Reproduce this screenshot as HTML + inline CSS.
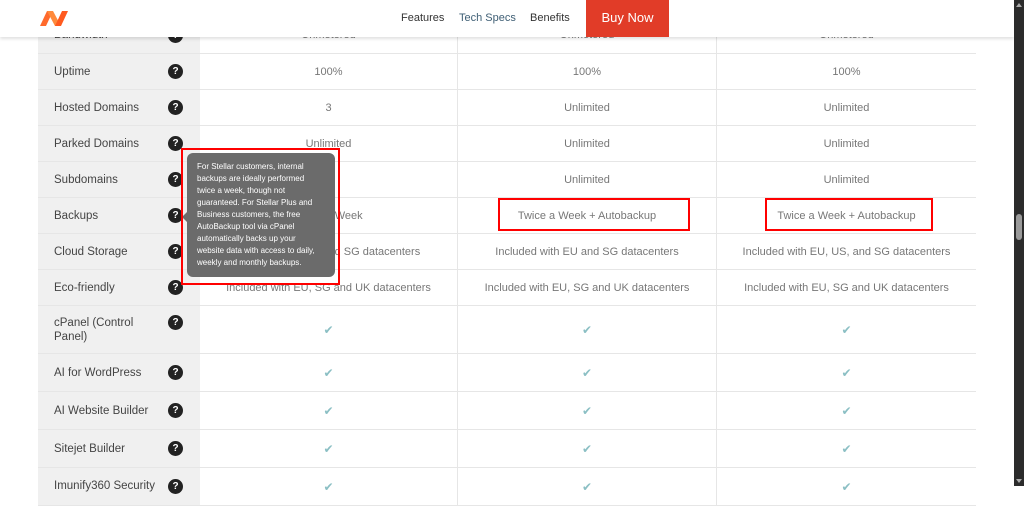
<!DOCTYPE html>
<html><head><meta charset="utf-8"><style>
*{margin:0;padding:0;box-sizing:border-box}
body{width:1024px;height:486px;overflow:hidden;background:#fff;font-family:"Liberation Sans",sans-serif;position:relative}
.row{position:absolute;left:38px;width:938px;border-bottom:1px solid #e6e6e6}
.lab{position:absolute;left:0;top:0;bottom:0;width:162px;background:#f0f0f0;color:#444;font-size:11.5px;padding-left:16px;display:flex;align-items:center}
.q{position:absolute;left:130px;width:15px;height:15px;border-radius:50%;background:#222;color:#fff;font-size:10px;font-weight:bold;text-align:center;line-height:15px}
.c{position:absolute;top:0;bottom:0;display:flex;align-items:center;justify-content:center;color:#777;font-size:11px}
.c1{left:162px;width:258px;border-right:1px solid #e6e6e6}
.c2{left:420px;width:259px;border-right:1px solid #e6e6e6}
.c3{left:679px;width:259px}
.ck{color:#8bbfc4;font-size:12px}
</style></head><body>

<div class="row" style="top:17px;height:37px"><div class="lab">Bandwidth</div><div class="q" style="top:11px">?</div><div class="c c1">Unmetered</div><div class="c c2">Unmetered</div><div class="c c3">Unmetered</div></div>
<div class="row" style="top:54px;height:36px"><div class="lab">Uptime</div><div class="q" style="top:10px">?</div><div class="c c1">100%</div><div class="c c2">100%</div><div class="c c3">100%</div></div>
<div class="row" style="top:90px;height:36px"><div class="lab">Hosted Domains</div><div class="q" style="top:10px">?</div><div class="c c1">3</div><div class="c c2">Unlimited</div><div class="c c3">Unlimited</div></div>
<div class="row" style="top:126px;height:36px"><div class="lab">Parked Domains</div><div class="q" style="top:10px">?</div><div class="c c1">Unlimited</div><div class="c c2">Unlimited</div><div class="c c3">Unlimited</div></div>
<div class="row" style="top:162px;height:36px"><div class="lab">Subdomains</div><div class="q" style="top:10px">?</div><div class="c c1">10</div><div class="c c2">Unlimited</div><div class="c c3">Unlimited</div></div>
<div class="row" style="top:198px;height:36px"><div class="lab">Backups</div><div class="q" style="top:10px">?</div><div class="c c1">Twice a Week</div><div class="c c2">Twice a Week + Autobackup</div><div class="c c3">Twice a Week + Autobackup</div></div>
<div class="row" style="top:234px;height:36px"><div class="lab">Cloud Storage</div><div class="q" style="top:10px">?</div><div class="c c1">Included with EU and SG datacenters</div><div class="c c2">Included with EU and SG datacenters</div><div class="c c3">Included with EU, US, and SG datacenters</div></div>
<div class="row" style="top:270px;height:36px"><div class="lab">Eco-friendly</div><div class="q" style="top:10px">?</div><div class="c c1">Included with EU, SG and UK datacenters</div><div class="c c2">Included with EU, SG and UK datacenters</div><div class="c c3">Included with EU, SG and UK datacenters</div></div>
<div class="row" style="top:306px;height:48px"><div class="lab" style="line-height:14px">cPanel (Control<br>Panel)</div><div class="q" style="top:9px">?</div><div class="c c1 ck">✔</div><div class="c c2 ck">✔</div><div class="c c3 ck">✔</div></div>
<div class="row" style="top:354px;height:38px"><div class="lab">AI for WordPress</div><div class="q" style="top:11px">?</div><div class="c c1 ck">✔</div><div class="c c2 ck">✔</div><div class="c c3 ck">✔</div></div>
<div class="row" style="top:392px;height:38px"><div class="lab">AI Website Builder</div><div class="q" style="top:11px">?</div><div class="c c1 ck">✔</div><div class="c c2 ck">✔</div><div class="c c3 ck">✔</div></div>
<div class="row" style="top:430px;height:38px"><div class="lab">Sitejet Builder</div><div class="q" style="top:11px">?</div><div class="c c1 ck">✔</div><div class="c c2 ck">✔</div><div class="c c3 ck">✔</div></div>
<div class="row" style="top:468px;height:38px"><div class="lab" style="align-items:flex-start;padding-top:12px">Imunify360 Security</div><div class="q" style="top:11px">?</div><div class="c c1 ck">✔</div><div class="c c2 ck">✔</div><div class="c c3 ck">✔</div></div>

<!-- tooltip -->
<div style="position:absolute;left:187px;top:153px;width:148px;height:124px;background:#6b6b6b;border-radius:6px;color:#fff;font-size:8px;line-height:12px;padding:8px 10px;white-space:nowrap">For Stellar customers, internal<br>backups are ideally performed<br>twice a week, though not<br>guaranteed. For Stellar Plus and<br>Business customers, the free<br>AutoBackup tool via cPanel<br>automatically backs up your<br>website data with access to daily,<br>weekly and monthly backups.</div>
<div style="position:absolute;left:182px;top:212px;width:0;height:0;border:5px solid transparent;border-right-color:#6b6b6b;border-left:0"></div>
<div style="position:absolute;left:181px;top:148px;width:159px;height:137px;border:2px solid #f00"></div>
<div style="position:absolute;left:498px;top:198px;width:192px;height:33px;border:2px solid #f00"></div>
<div style="position:absolute;left:765px;top:198px;width:168px;height:33px;border:2px solid #f00"></div>

<!-- header -->
<div style="position:absolute;left:0;top:0;width:1014px;height:37px;background:#fff;box-shadow:0 2px 3px rgba(0,0,0,.12)">
<svg style="position:absolute;left:38px;top:9px" width="32" height="18" viewBox="0 0 32 18"><path d="M2 17 L9 2 L15 2 L8 17Z" fill="#ff6a2c"/><path d="M9 2 L15 2 L23 17 L17 17Z" fill="#ff8a3c"/><path d="M17 17 L24 2 L30 2 L23 17Z" fill="#ff5a1f"/></svg>
<span style="position:absolute;left:401px;top:12px;font-size:11px;color:#333">Features</span>
<span style="position:absolute;left:459px;top:12px;font-size:11px;color:#3f5f75">Tech Specs</span>
<span style="position:absolute;left:530px;top:12px;font-size:11px;color:#333">Benefits</span>
<div style="position:absolute;left:586px;top:0;width:83px;height:37px;background:#e13c28;color:#fff;font-size:13px;text-align:center;line-height:36px">Buy Now</div>
</div>

<!-- scrollbar -->
<div style="position:absolute;left:1014px;top:0;width:10px;height:486px;background:#2b2b2b"></div>
<div style="position:absolute;left:1016px;top:214px;width:6px;height:26px;background:#9a9a9a;border-radius:3px"></div>
<div style="position:absolute;left:1016px;top:3px;width:0;height:0;border-left:3px solid transparent;border-right:3px solid transparent;border-bottom:4px solid #aaa"></div>
<div style="position:absolute;left:1016px;top:479px;width:0;height:0;border-left:3px solid transparent;border-right:3px solid transparent;border-top:4px solid #aaa"></div>
</body></html>
